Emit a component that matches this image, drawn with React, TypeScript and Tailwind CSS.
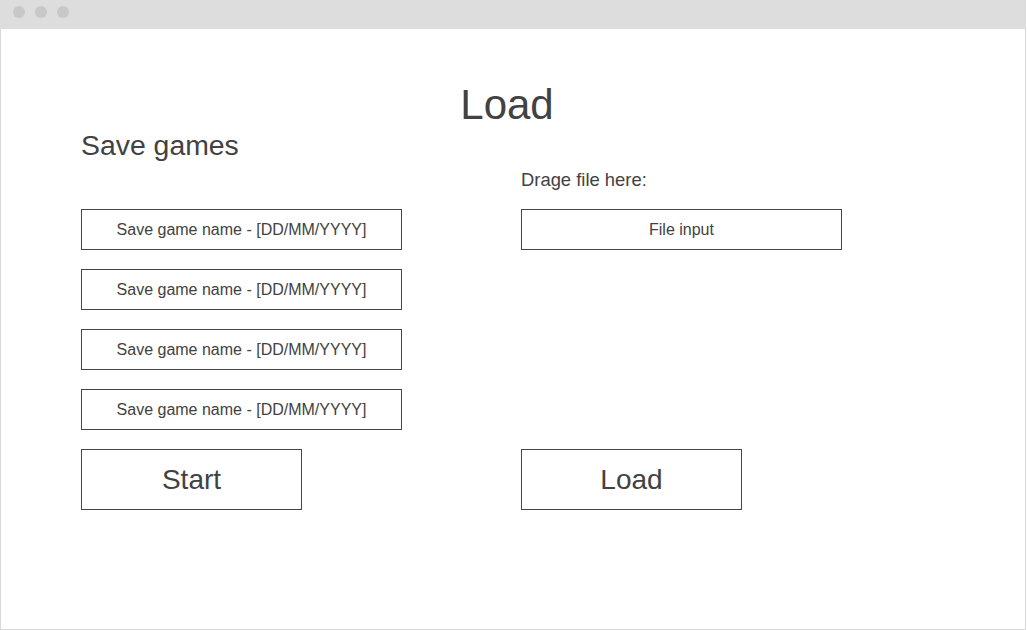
export default function App() {
  const saves = [1, 2, 3, 4]

  return (
    <div className="w-[1027px] h-[630px] bg-white font-['Liberation_Sans',Arial,sans-serif] text-[#424242]">
      <div className="w-[1026px] h-[630px] flex flex-col">
        <div className="h-[29px] bg-[#dddddd] flex items-start gap-[10px] pl-[13px] pt-[6px] shrink-0">
          <span className="w-[12px] h-[12px] rounded-full bg-[#c8c8c8]" />
          <span className="w-[12px] h-[12px] rounded-full bg-[#c8c8c8]" />
          <span className="w-[12px] h-[12px] rounded-full bg-[#c8c8c8]" />
        </div>

        <div className="flex-1 border-x border-b border-[#d9d9d9]">
          <h1 className="mt-[55px] h-[42px] text-[42px] leading-none text-center pr-[12px]">Load</h1>

          <div className="mt-[5px] pl-[80px] grid grid-cols-[440px_1fr]">
            <div className="h-[78px]">
              <h2 className="text-[28.4px] leading-none">Save games</h2>
            </div>
            <div className="h-[78px] flex items-end pb-[20px]">
              <p className="text-[18.4px] leading-none">Drage file here:</p>
            </div>

            <div className="flex flex-col gap-[19px]">
              {saves.map((n) => (
                <div
                  key={n}
                  className="w-[321px] h-[41px] border border-[#454545] flex items-center justify-center text-[16px]"
                >
                  Save game name - [DD/MM/YYYY]
                </div>
              ))}
            </div>
            <div>
              <div className="w-[321px] h-[41px] border border-[#454545] flex items-center justify-center text-[16px]">
                File input
              </div>
            </div>

            <div className="mt-[19px]">
              <button className="w-[221px] h-[61px] border border-[#454545] text-[28px] flex items-center justify-center">
                Start
              </button>
            </div>
            <div className="mt-[19px]">
              <button className="w-[221px] h-[61px] border border-[#454545] text-[28px] flex items-center justify-center">
                Load
              </button>
            </div>
          </div>
        </div>
      </div>
    </div>
  )
}
